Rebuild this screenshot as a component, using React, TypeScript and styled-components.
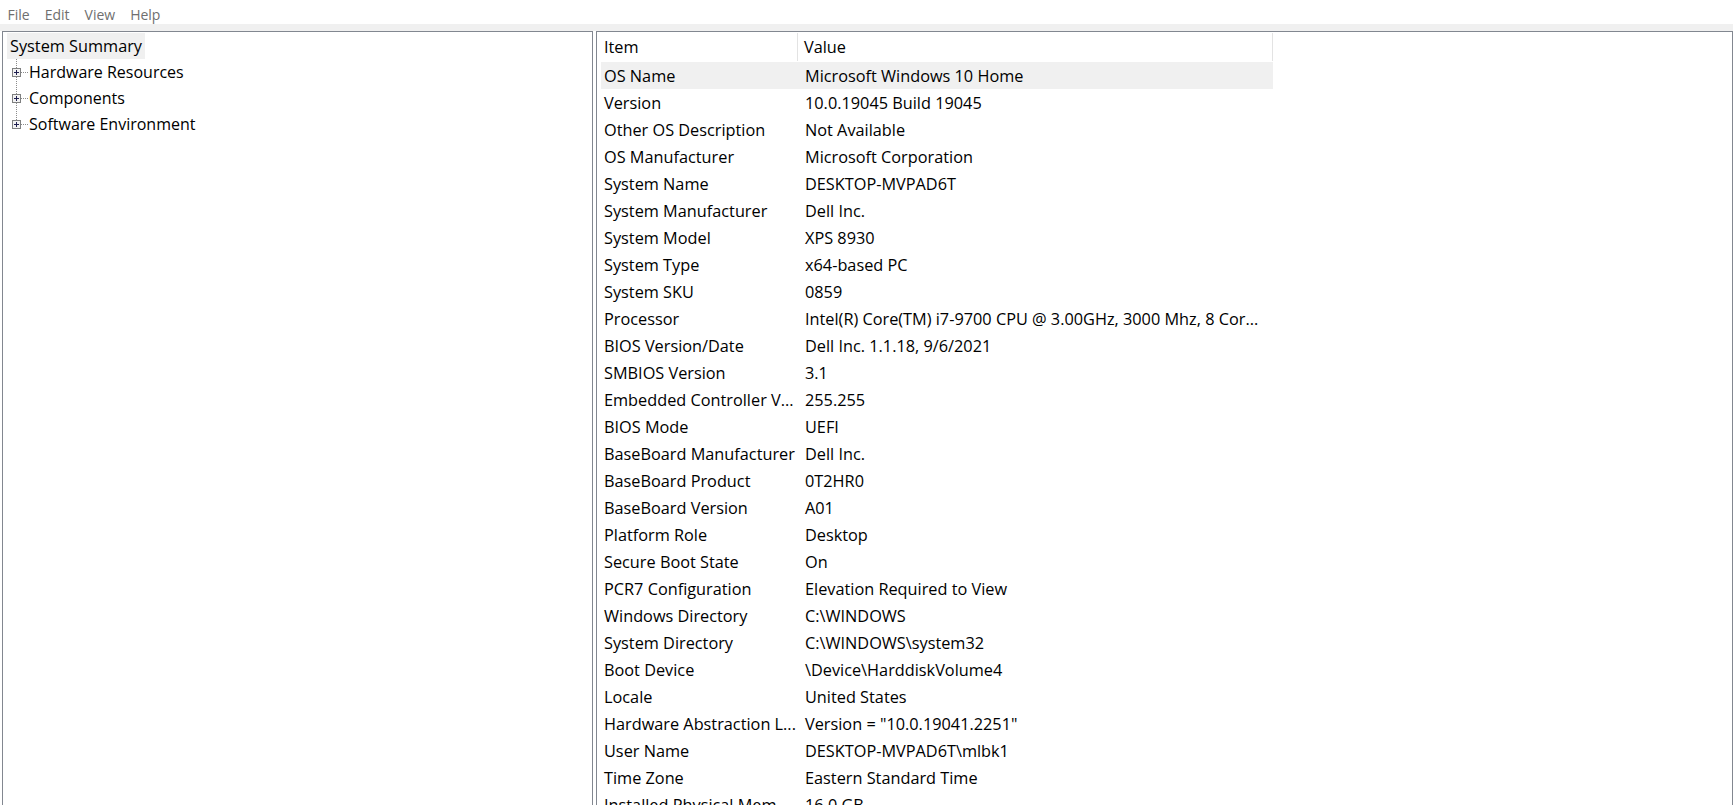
import React from 'react'
import styled, { createGlobalStyle } from 'styled-components'

const GlobalStyle = createGlobalStyle`
  html, body {
    margin: 0;
    padding: 0;
    background: #ffffff;
    overflow: hidden;
  }
  body {
    font-family: 'Open Sans', 'Noto Sans', 'Liberation Sans', sans-serif;
    color: #000000;
  }
`

const Window = styled.div`
  display: flex;
  flex-direction: column;
  width: 100vw;
  height: 100vh;
`

const MenuBar = styled.div`
  display: flex;
  align-items: center;
  height: 24px;
  padding-top: 5px;
  box-sizing: border-box;
  background: #ffffff;
`

const MenuItem = styled.span`
  padding: 0 7.5px;
  font-size: 14px;
  color: #6f6f6f;
  line-height: 20px;
`

const Gutter = styled.div`
  height: 7px;
  background: #f0f0f0;
`

const Panes = styled.div`
  flex: 1;
  display: flex;
  gap: 3px;
  padding-left: 2px;
  min-height: 0;
`

const Pane = styled.div<{ $width?: number }>`
  ${({ $width }) => ($width ? `width: ${$width}px;` : 'flex: 1;')}
  box-sizing: border-box;
  height: calc(100% + 4px);
  border: 1px solid #828790;
  background: #ffffff;
  overflow: hidden;
`

const Tree = styled.div`
  display: flex;
  flex-direction: column;
  padding: 1px 0 0 0;
`

const TreeRow = styled.div`
  display: flex;
  align-items: center;
  height: 26px;
  font-size: 16px;
  white-space: nowrap;
`

const RootLabel = styled.span<{ $selected?: boolean }>`
  margin-left: 4px;
  padding: 0 3px;
  line-height: 26px;
  font-size: 16.3px;
  background: ${({ $selected }) => ($selected ? '#f0f0f0' : 'transparent')};
`

const Connector = styled.svg`
  flex: none;
  width: 26px;
  height: 26px;
`

const Table = styled.div`
  display: grid;
  grid-template-columns: 197px 475px;
  margin-left: 4px;
  font-size: 16.3px;
  white-space: nowrap;
`

const HeaderCell = styled.div<{ $pad: number }>`
  height: 28px;
  margin: 1px 0;
  display: flex;
  align-items: center;
  padding-left: ${({ $pad }) => $pad}px;
  border-right: 1px solid #e3e3e3;
  box-sizing: border-box;
`

const Cell = styled.div<{ $pad: number; $selected?: boolean }>`
  height: 27px;
  display: flex;
  align-items: center;
  padding-left: ${({ $pad }) => $pad}px;
  background: ${({ $selected }) => ($selected ? '#f0f0f0' : 'transparent')};
  overflow: hidden;
  box-sizing: border-box;
`

type Branch = 'middle' | 'last'

const TreeConnector: React.FC<{ branch: Branch }> = ({ branch }) => (
  <Connector viewBox="0 0 26 26">
    <line
      x1="13.5"
      y1="0"
      x2="13.5"
      y2={branch === 'last' ? 9 : 26}
      stroke="#8c8c8c"
      strokeDasharray="1 1"
    />
    <line x1="18" y1="13.5" x2="26" y2="13.5" stroke="#8c8c8c" strokeDasharray="1 1" />
    <rect x="9.5" y="9.5" width="8" height="8" fill="#f2f2f2" stroke="#7f8080" />
    <line x1="11" y1="13.5" x2="16" y2="13.5" stroke="#1f1f4f" />
    <line x1="13.5" y1="11" x2="13.5" y2="16" stroke="#1f1f4f" />
  </Connector>
)

const branches: string[] = ['Hardware Resources', 'Components', 'Software Environment']

const rows: [string, string][] = [
  ['OS Name', 'Microsoft Windows 10 Home'],
  ['Version', '10.0.19045 Build 19045'],
  ['Other OS Description', 'Not Available'],
  ['OS Manufacturer', 'Microsoft Corporation'],
  ['System Name', 'DESKTOP-MVPAD6T'],
  ['System Manufacturer', 'Dell Inc.'],
  ['System Model', 'XPS 8930'],
  ['System Type', 'x64-based PC'],
  ['System SKU', '0859'],
  ['Processor', 'Intel(R) Core(TM) i7-9700 CPU @ 3.00GHz, 3000 Mhz, 8 Cor...'],
  ['BIOS Version/Date', 'Dell Inc. 1.1.18, 9/6/2021'],
  ['SMBIOS Version', '3.1'],
  ['Embedded Controller V...', '255.255'],
  ['BIOS Mode', 'UEFI'],
  ['BaseBoard Manufacturer', 'Dell Inc.'],
  ['BaseBoard Product', '0T2HR0'],
  ['BaseBoard Version', 'A01'],
  ['Platform Role', 'Desktop'],
  ['Secure Boot State', 'On'],
  ['PCR7 Configuration', 'Elevation Required to View'],
  ['Windows Directory', 'C:\\WINDOWS'],
  ['System Directory', 'C:\\WINDOWS\\system32'],
  ['Boot Device', '\\Device\\HarddiskVolume4'],
  ['Locale', 'United States'],
  ['Hardware Abstraction L...', 'Version = "10.0.19041.2251"'],
  ['User Name', 'DESKTOP-MVPAD6T\\mlbk1'],
  ['Time Zone', 'Eastern Standard Time'],
  ['Installed Physical Mem...', '16.0 GB'],
]

export default function App() {
  return (
    <>
      <GlobalStyle />
      <Window>
        <MenuBar>
          {['File', 'Edit', 'View', 'Help'].map((m) => (
            <MenuItem key={m}>{m}</MenuItem>
          ))}
        </MenuBar>
        <Gutter />
        <Panes>
          <Pane $width={591}>
            <Tree>
              <TreeRow>
                <RootLabel $selected>System Summary</RootLabel>
              </TreeRow>
              {branches.map((b, i) => (
                <TreeRow key={b}>
                  <TreeConnector branch={i === branches.length - 1 ? 'last' : 'middle'} />
                  {b}
                </TreeRow>
              ))}
            </Tree>
          </Pane>
          <Pane>
            <Table>
              <HeaderCell $pad={3}>Item</HeaderCell>
              <HeaderCell $pad={6}>Value</HeaderCell>
              {rows.map(([item, value], i) => (
                <React.Fragment key={item}>
                  <Cell $pad={3} $selected={i === 0}>
                    {item}
                  </Cell>
                  <Cell $pad={7} $selected={i === 0}>
                    {value}
                  </Cell>
                </React.Fragment>
              ))}
            </Table>
          </Pane>
        </Panes>
      </Window>
    </>
  )
}
